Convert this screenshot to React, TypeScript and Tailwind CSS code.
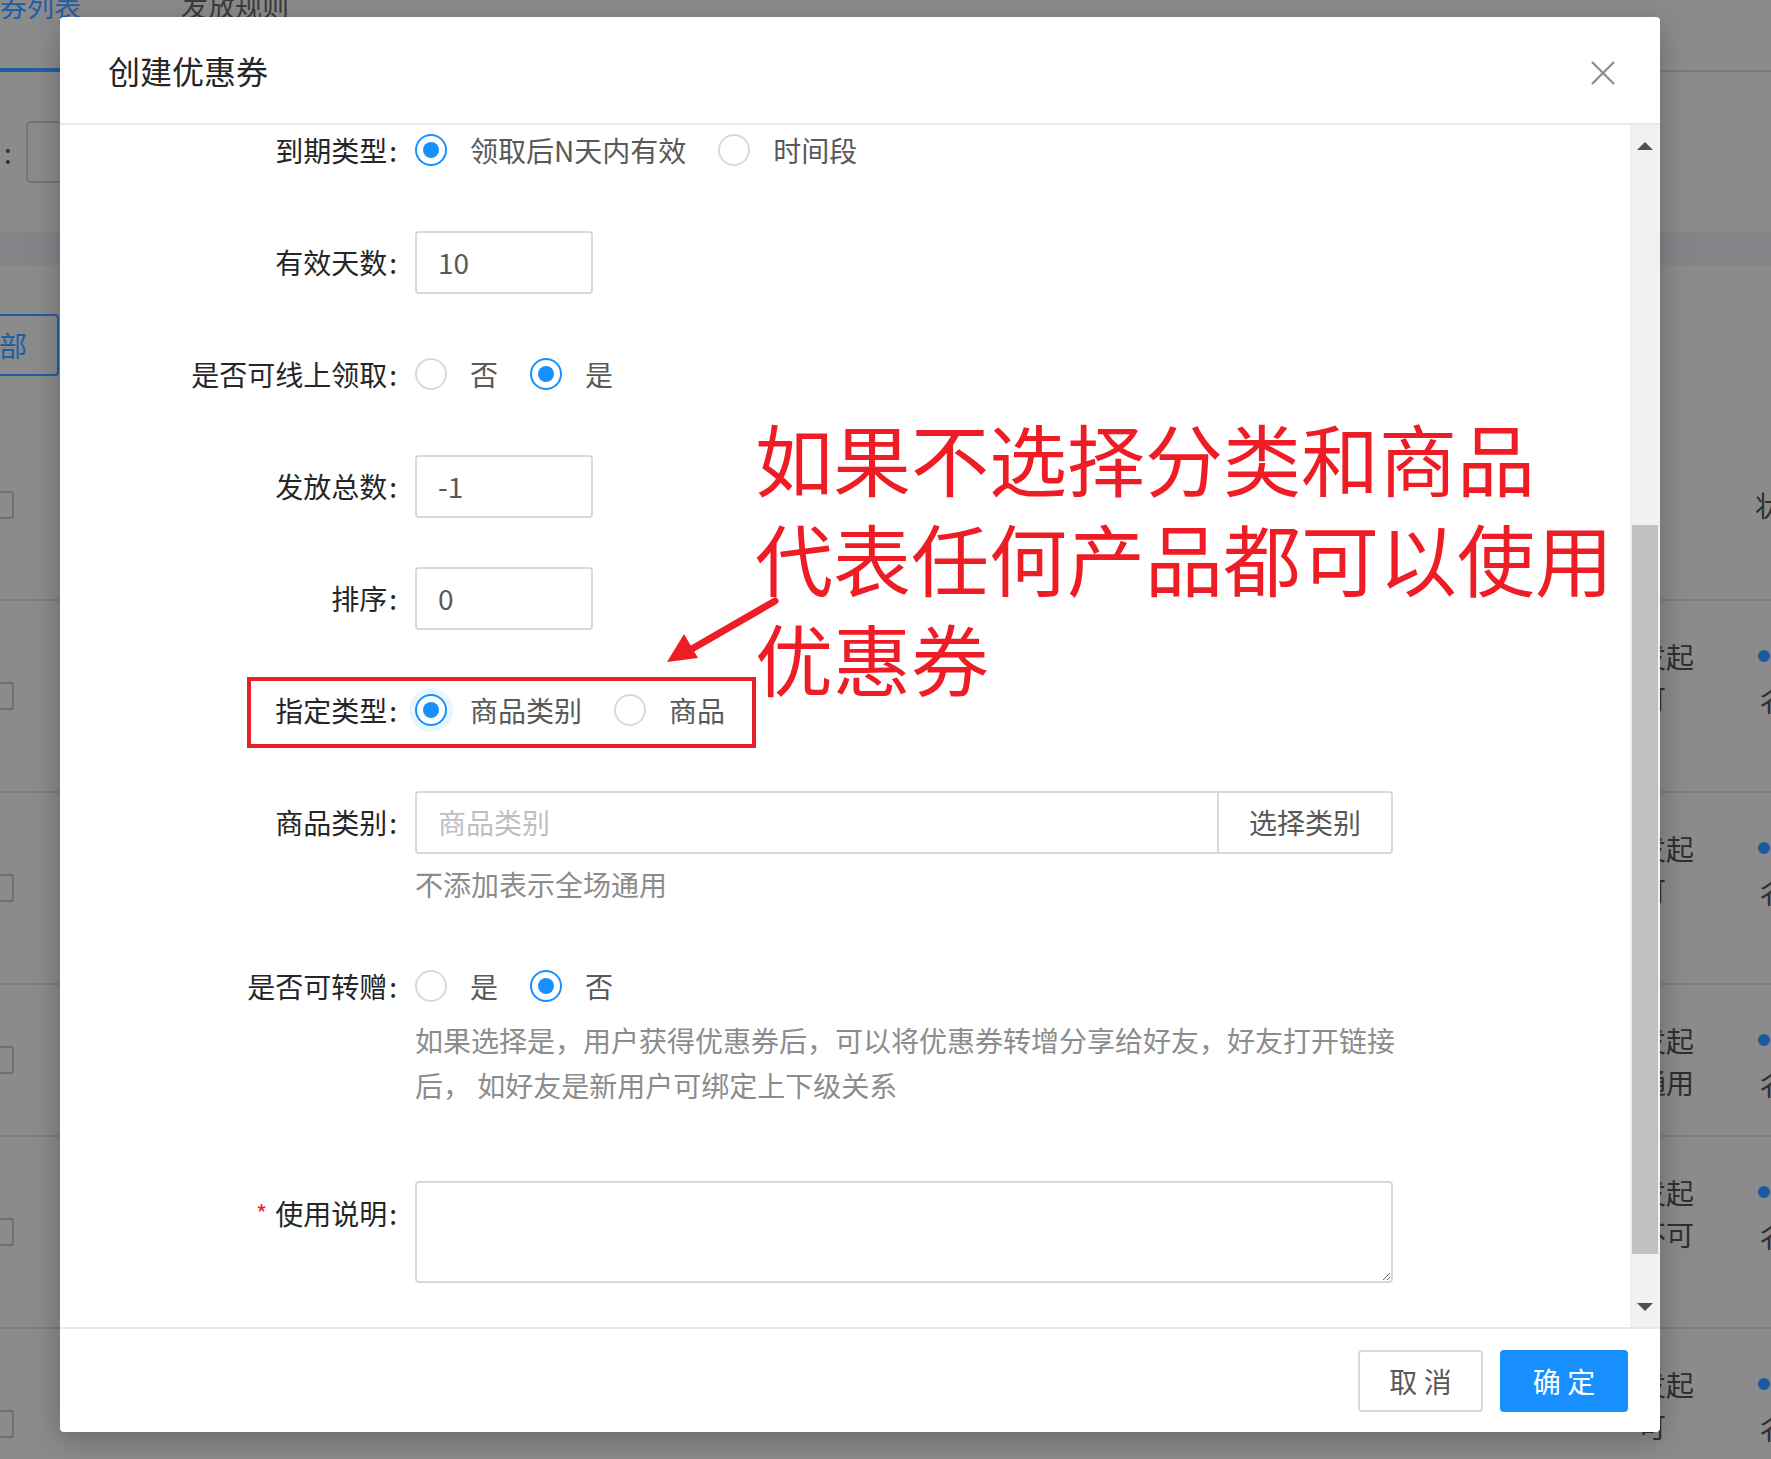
import React from "react";

const font = "font-['Noto_Sans_CJK_SC','Noto_Sans',sans-serif]";

function Radio({ checked, focus }: { checked?: boolean; focus?: boolean }) {
  return (
    <span
      className={`flex h-[32px] w-[32px] shrink-0 items-center justify-center rounded-full border-2 bg-white ${
        checked ? "border-[#1890ff]" : "border-[#d9d9d9]"
      } ${focus ? "shadow-[0_0_0_6px_#e6f7ff]" : ""}`}
    >
      {checked && <span className="h-[16px] w-[16px] rounded-full bg-[#1890ff]" />}
    </span>
  );
}

function Option({ label, checked, focus }: { label: string; checked?: boolean; focus?: boolean }) {
  return (
    <label className="mr-[16px] flex items-center">
      <Radio checked={checked} focus={focus} />
      <span className="pl-[23px] pr-[16px] text-[28px] text-[#595959]">{label}</span>
    </label>
  );
}

function Label({ text, required }: { text: string; required?: boolean }) {
  return (
    <div className="flex w-[355px] shrink-0 items-center justify-end pr-[18px] text-[28px] text-[#262626]">
      {required && <span className="mr-[8px] text-[24px] text-[#f5222d]">*</span>}
      <span>{text}</span>
      <span className="ml-[2px]">:</span>
    </div>
  );
}

function Field({ label, children, required }: { label: string; children: React.ReactNode; required?: boolean }) {
  return (
    <div className="mb-[48px] flex h-[64px] items-center">
      <Label text={label} required={required} />
      {children}
    </div>
  );
}

function TextInput({ value }: { value: string }) {
  return (
    <div className="flex h-[63px] w-[178px] items-center rounded-[4px] border-2 border-[#d9d9d9] pl-[21px] text-[28px] text-[#595959]">
      {value}
    </div>
  );
}

function BgRow({ a, b, h }: { a: [string, string]; b: string; h: string }) {
  return (
    <div className={`flex ${h} border-t-2 border-[#7c7c7c]`}>
      <div className="flex w-[40px] items-center">
        <span className="ml-[-14px] h-[28px] w-[28px] rounded-[3px] border-2 border-[#6f6f6f]" />
      </div>
      <div className="flex-1" />
      <div className="w-[117px] pt-[34px] text-[28px] leading-[42px] text-[#2f2f2f]">
        <div>{a[0]}</div>
        <div>{a[1]}</div>
      </div>
      <div className="w-[16px] pt-[34px] text-[28px] leading-[42px] text-[#2f2f2f]">
        <div className="flex h-[42px] items-center">
          <span className="ml-[3px] h-[12px] w-[12px] rounded-full bg-[#1a5ba0]" />
        </div>
        <div className="mt-[2px]">{b}</div>
      </div>
    </div>
  );
}

export default function App() {
  return (
    <div className={`relative h-[1459px] w-[1771px] overflow-hidden bg-[#8b8b8b] ${font}`}>
      {/* page behind the mask */}
      <div className="flex flex-col">
        <div className="flex h-[72px] items-start border-b-2 border-[#7b7b7b]">
          <div className="mt-[-16px] flex h-[88px] flex-col justify-between">
            <span className="text-[27px] leading-[44px] text-[#1f5ea6]">券列表</span>
            <span className="h-[4px] w-[60px] bg-[#1f5ea6]" />
          </div>
          <span className="ml-[100px] mt-[-16px] text-[27px] leading-[44px] text-[#3a3a3a]">发放规则</span>
        </div>
        <div className="flex h-[160px] items-center">
          <span className="ml-[4px] text-[28px] text-[#2f2f2f]">:</span>
          <span className="ml-[14px] h-[62px] w-[60px] rounded-[4px] border-2 border-[#767676]" />
        </div>
        <div className="h-[33px] bg-[#838488]" />
        <div className="flex h-[145px] items-start pt-[49px]">
          <span className="flex h-[62px] w-[59px] items-center justify-end rounded-r-[4px] border-2 border-l-0 border-[#1f5ea6] pr-[30px] text-[28px] text-[#1f5ea6]">
            部
          </span>
        </div>
        <div className="flex h-[189px]">
          <div className="flex w-[40px] items-center">
            <span className="ml-[-14px] h-[28px] w-[28px] rounded-[3px] border-2 border-[#6f6f6f]" />
          </div>
          <div className="flex-1" />
          <div className="flex w-[16px] items-center text-[28px] text-[#2f2f2f]">状</div>
        </div>
        <BgRow a={["发起", "可"]} b="彳" h="h-[192px]" />
        <BgRow a={["发起", "可"]} b="彳" h="h-[192px]" />
        <BgRow a={["发起", "通用"]} b="彳" h="h-[152px]" />
        <BgRow a={["发起", "不可"]} b="彳" h="h-[192px]" />
        <BgRow a={["发起", "可"]} b="彳" h="h-[192px]" />
      </div>

      {/* modal */}
      <div className="absolute left-[60px] top-[17px] flex h-[1415px] w-[1600px] flex-col overflow-hidden rounded-[4px] bg-white shadow-[0_8px_30px_rgba(0,0,0,0.25)]">
        <div className="flex h-[108px] shrink-0 items-center justify-between border-b-2 border-[#e8e8e8] pl-[48px] pr-[44px]">
          <span className="text-[32px] text-[#262626]">创建优惠券</span>
          <svg width="26" height="26" viewBox="0 0 26 26" className="mt-[6px] text-[#8c8c8c]">
            <path d="M2 2 L24 24 M24 2 L2 24" stroke="currentColor" strokeWidth="2.2" fill="none" />
          </svg>
        </div>

        <div className="flex min-h-0 flex-1">
          <div className="min-w-0 flex-1 overflow-hidden">
            <div className="mt-[-7px]">
              <Field label="到期类型">
                <Option label="领取后N天内有效" checked />
                <Option label="时间段" />
              </Field>
              <Field label="有效天数">
                <TextInput value="10" />
              </Field>
              <Field label="是否可线上领取">
                <Option label="否" />
                <Option label="是" checked />
              </Field>
              <Field label="发放总数">
                <TextInput value="-1" />
              </Field>
              <Field label="排序">
                <TextInput value="0" />
              </Field>
              <Field label="指定类型">
                <Option label="商品类别" checked focus />
                <Option label="商品" />
              </Field>
              <div className="flex h-[64px] items-center">
                <Label text="商品类别" />
                <div className="flex h-[63px] w-[978px] rounded-[4px] border-2 border-[#d9d9d9]">
                  <div className="flex flex-1 items-center pl-[21px] text-[28px] text-[#bfbfbf]">商品类别</div>
                  <div className="flex w-[174px] items-center justify-center border-l-2 border-[#d9d9d9] text-[28px] text-[#595959]">
                    选择类别
                  </div>
                </div>
              </div>
              <div className="mb-[48px] flex pt-[8px]">
                <div className="w-[355px] shrink-0" />
                <div className="text-[28px] leading-[44px] text-[#8c8c8c]">不添加表示全场通用</div>
              </div>
              <div className="flex h-[64px] items-center">
                <Label text="是否可转赠" />
                <Option label="是" />
                <Option label="否" checked />
              </div>
              <div className="mb-[73px] flex">
                <div className="w-[355px] shrink-0" />
                <div className="whitespace-nowrap text-[28px] leading-[45px] text-[#8c8c8c]">
                  <div>如果选择是，用户获得优惠券后，可以将优惠券转增分享给好友，好友打开链接</div>
                  <div>后， 如好友是新用户可绑定上下级关系</div>
                </div>
              </div>
              <div className="flex items-start">
                <div className="flex h-[64px] items-center">
                  <Label text="使用说明" required />
                </div>
                <textarea className="h-[102px] w-[978px] resize-y rounded-[4px] border-2 border-[#d9d9d9] bg-white outline-none" />
              </div>
            </div>
          </div>

          {/* scrollbar */}
          <div className="flex w-[30px] shrink-0 flex-col bg-[#f1f1f1]">
            <div className="flex h-[40px] items-center justify-center pt-[2px]">
              <span className="h-0 w-0 border-x-[8px] border-b-[8px] border-x-transparent border-b-[#505050]" />
            </div>
            <div className="h-[360px]" />
            <div className="mx-[2px] h-[729px] bg-[#c1c1c1]" />
            <div className="flex flex-1 items-end justify-center pb-[16px]">
              <span className="h-0 w-0 border-x-[8px] border-t-[8px] border-x-transparent border-t-[#505050]" />
            </div>
          </div>
        </div>

        <div className="flex h-[105px] shrink-0 items-center justify-end gap-[17px] border-t-2 border-[#e8e8e8] pr-[32px]">
          <button className="h-[62px] w-[125px] rounded-[4px] border-2 border-[#d9d9d9] bg-white text-[28px] text-[#595959]">
            取 消
          </button>
          <button className="h-[62px] w-[128px] rounded-[4px] bg-[#1890ff] text-[28px] text-white">确 定</button>
        </div>
      </div>

      {/* annotation */}
      <div className="absolute left-[247px] top-[677px] h-[71px] w-[509px] border-[4px] border-[#e8202a]" />
      <div className="absolute left-[755px] top-[407px] text-[78px] leading-[100px] text-[#ee1c25]">
        <div>如果不选择分类和商品</div>
        <div>代表任何产品都可以使用</div>
        <div>优惠券</div>
      </div>
      <svg className="absolute left-[650px] top-[590px]" width="140" height="90" viewBox="0 0 140 90">
        <path d="M125 11 L40 60" stroke="#ee1c25" strokeWidth="7" strokeLinecap="round" fill="none" />
        <path d="M17 72 L34 44 L48 68 Z" fill="#ee1c25" />
      </svg>
    </div>
  );
}
